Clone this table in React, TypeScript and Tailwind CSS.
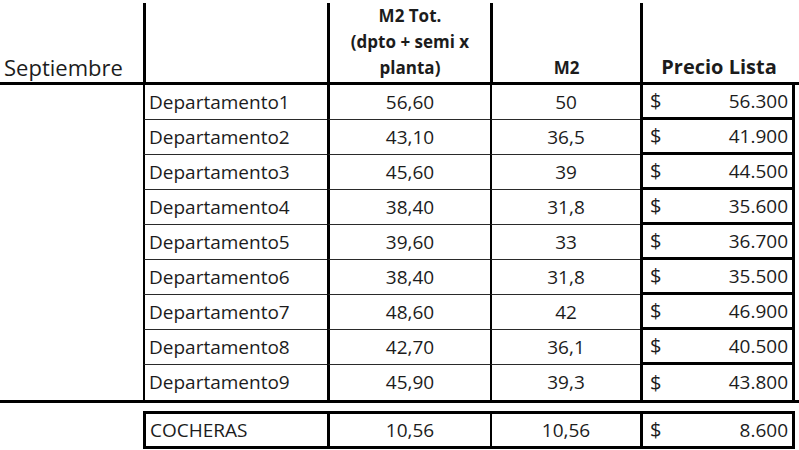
import React from 'react';

const rows = [
   ['Departamento1', '56,60', '50', '56.300'],
   ['Departamento2', '43,10', '36,5', '41.900'],
   ['Departamento3', '45,60', '39', '44.500'],
   ['Departamento4', '38,40', '31,8', '35.600'],
   ['Departamento5', '39,60', '33', '36.700'],
   ['Departamento6', '38,40', '31,8', '35.500'],
   ['Departamento7', '48,60', '42', '46.900'],
   ['Departamento8', '42,70', '36,1', '40.500'],
   ['Departamento9', '45,90', '39,3', '43.800'],
];

const grid = 'grid grid-cols-[143px_184px_163px_150px_155px]';

const App = () => {
   return (
      <div
         className="h-[450px] w-[799px] overflow-hidden bg-white text-[#1c1c1c]"
         style={{ fontFamily: '"Open Sans", "Noto Sans", sans-serif' }}
      >
         {/* Header */}
         <div className="border-b-[3px] border-black pt-[3px]">
            <div className={`${grid} h-[79px]`}>
               <div className="flex items-end pl-[4px] text-[22px] leading-[30px]">
                  Septiembre
               </div>
               <div className="border-l-[3px] border-black" />
               <div className="flex flex-col items-center justify-end border-l-[3px] border-black pb-[1px] text-center text-[17px] font-bold leading-[26px]">
                  <span>M2 Tot.</span>
                  <span>(dpto + semi x</span>
                  <span>planta)</span>
               </div>
               <div className="flex items-end justify-center border-l-[3px] border-black pb-[1px] text-[17px] font-bold leading-[26px]">
                  M2
               </div>
               <div className="flex items-end justify-center border-l-[3px] border-black text-[20px] font-bold leading-[30px]">
                  Precio Lista
               </div>
            </div>
         </div>

         {/* Body */}
         <div className="border-b-[3px] border-black">
            {rows.map(([name, tot, m2, price], i) => {
               const last = i === rows.length - 1;
               return (
                  <div
                     key={name}
                     className={`${grid} h-[35px] text-[19px]`}
                  >
                     <div />
                     <div
                        className={`flex items-center border-l-2 border-black pl-[4px] ${last ? '' : 'border-b border-b-[#2a2a2a]'}`}
                     >
                        {name}
                     </div>
                     <div
                        className={`flex items-center justify-center border-l-[3px] border-black ${last ? '' : 'border-b border-b-[#2a2a2a]'}`}
                     >
                        {tot}
                     </div>
                     <div
                        className={`flex items-center justify-center border-l-2 border-black ${last ? '' : 'border-b border-b-[#2a2a2a]'}`}
                     >
                        {m2}
                     </div>
                     <div
                        className={`flex items-center justify-between border-x-[3px] border-black pl-[7px] pr-[4px] ${last ? '' : 'border-b-[3px]'}`}
                     >
                        <span className="text-[20px]">$</span>
                        <span>{price}</span>
                     </div>
                  </div>
               );
            })}
         </div>

         {/* Cocheras */}
         <div className={`${grid} mt-[8px] h-[38px] text-[19px]`}>
            <div />
            <div className="flex items-center border-y-[3px] border-l-[3px] border-black pl-[4px]">
               COCHERAS
            </div>
            <div className="flex items-center justify-center border-y-[3px] border-l-[3px] border-black">
               10,56
            </div>
            <div className="flex items-center justify-center border-y-[3px] border-l-2 border-black">
               10,56
            </div>
            <div className="flex items-center justify-between border-[3px] border-black pl-[7px] pr-[4px]">
               <span className="text-[20px]">$</span>
               <span>8.600</span>
            </div>
         </div>
      </div>
   );
};

export default App;
